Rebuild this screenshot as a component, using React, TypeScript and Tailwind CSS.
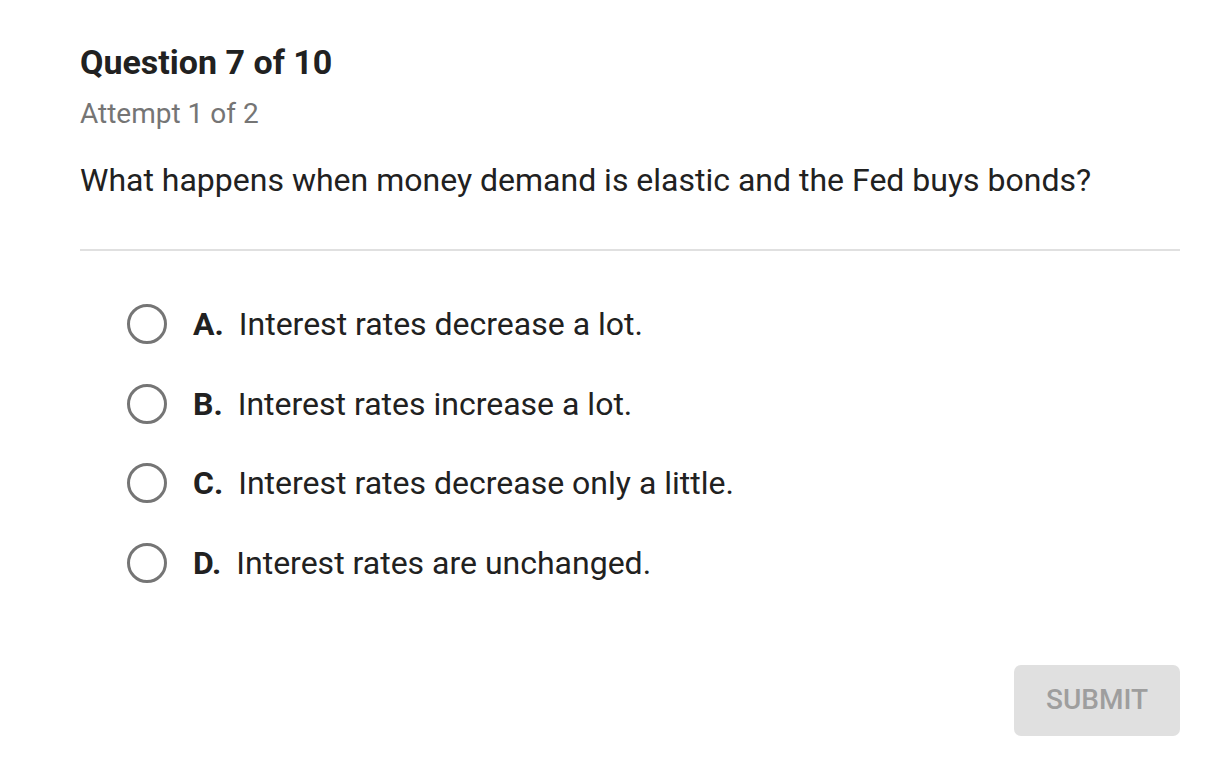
const options = [
	{ letter: "A.", text: "Interest rates decrease a lot." },
	{ letter: "B.", text: "Interest rates increase a lot." },
	{ letter: "C.", text: "Interest rates decrease only a little." },
	{ letter: "D.", text: "Interest rates are unchanged." },
];

export default function App() {
	return (
		<div className="min-h-screen bg-white pl-[80px] pr-[26px] pt-[42px] text-[#212121] [font-family:Roboto,'Liberation_Sans',sans-serif]">
			<h1 className="text-[34px] font-bold leading-[40px]">Question 7 of 10</h1>
			<p className="mt-[16px] text-[28px] leading-[32px] text-[#757575]">Attempt 1 of 2</p>
			<p className="mt-[30px] text-[32px] leading-[40px]">
				What happens when money demand is elastic and the Fed buys bonds?
			</p>
			<div className="mt-[49px] h-[2px] bg-[#e0e0e0]" />

			{/* Answer choices */}
			<div className="mt-[53px] flex flex-col gap-[39.5px] pl-[47px]">
				{options.map((o) => (
					<label key={o.letter} className="flex h-[40px] cursor-pointer items-center">
						<span className="h-[40px] w-[40px] shrink-0 rounded-full border-[3px] border-[#757575]" />
						<span className="ml-[26px] text-[32px] font-bold">{o.letter}</span>
						<span className="ml-[15px] text-[32px]">{o.text}</span>
					</label>
				))}
			</div>

			<div className="mt-[82px] flex justify-end">
				<button
					type="button"
					disabled
					className="h-[71px] w-[166px] rounded-[7px] bg-[#e0e0e0] text-[28px] font-medium text-[#9e9e9e]"
				>
					SUBMIT
				</button>
			</div>
		</div>
	);
}
